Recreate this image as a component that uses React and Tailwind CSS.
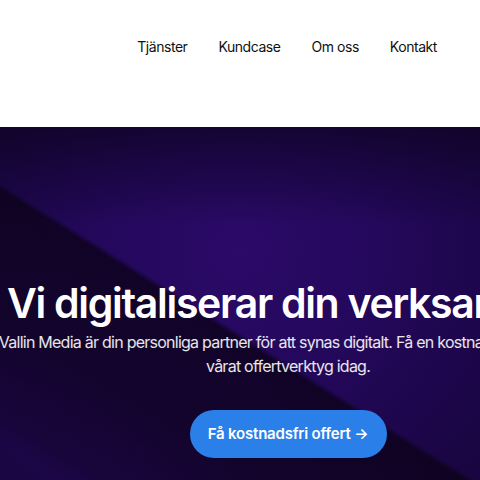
export default function App() {
    return (
        <div className="w-full h-[480px] overflow-hidden bg-white font-['Inter',sans-serif]">
            <header className="h-[127px] flex items-start justify-end pr-[43px] pt-[36px]">
                <nav className="flex gap-[31px] text-[14px] text-[#111] tracking-[-0.45px]">
                    <a>Tjänster</a>
                    <a>Kundcase</a>
                    <a>Om oss</a>
                    <a>Kontakt</a>
                </nav>
            </header>
            <section className="relative h-[353px] flex justify-start overflow-hidden bg-[#24085a]">
                {/* glow */}
                <div className="absolute inset-0 bg-[radial-gradient(ellipse_at_50%_35%,#2b0a68_0%,#24085c_40%,#18053e_100%)]" />
                {/* dark diagonal band */}
                <div className="absolute inset-0 bg-[linear-gradient(212deg,transparent_0%,transparent_54.5%,rgba(12,2,26,0.8)_55.5%,rgba(14,3,30,0.7)_75%,rgba(20,4,44,0.45)_90%,rgba(40,10,90,0.1)_94%)]" />
                {/* darker top edge */}
                <div className="absolute inset-0 bg-[linear-gradient(180deg,rgba(10,2,24,0.6)_0%,transparent_28%)]" />
                <div className="relative w-[576px] shrink-0 flex flex-col items-center text-center text-white pt-[152px]">
                    <h1 className="text-[41px] leading-[48px] font-semibold tracking-[-1.3px] whitespace-nowrap">
                        Vi digitaliserar din verksamhet
                    </h1>
                    <p className="mt-[3px] text-[16px] leading-[24px] text-white/90 tracking-[-0.75px] whitespace-nowrap">
                        Vallin Media är din personliga partner för att synas digitalt. Få en kostnadsfri offert via
                        <br />
                        vårat offertverktyg idag.
                    </p>
                    <button className="mt-[32px] h-[48px] w-[197px] rounded-full bg-[#2a7fe8] text-[15px] font-semibold text-white tracking-[-0.2px]">
                        Få kostnadsfri offert →
                    </button>
                </div>
            </section>
        </div>
    );
}
